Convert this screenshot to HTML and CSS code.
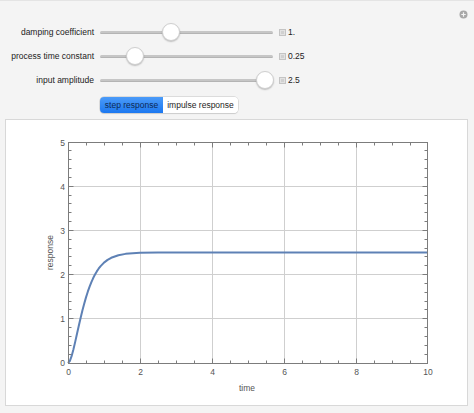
FILE: index.html
```html
<!DOCTYPE html>
<html>
<head>
<meta charset="utf-8">
<link rel="stylesheet" href="styles.css">
</head>
<body>
<div class="app">
  <div class="corner-btn" aria-label="more">
    <svg width="9" height="9" viewBox="0 0 9 9"><circle cx="4.5" cy="4.5" r="4" fill="#a7a7a7"/><path d="M4.5 2.3v4.4M2.3 4.5h4.4" stroke="#f4f4f4" stroke-width="1.2"/></svg>
  </div>
  <div class="controls">
    <div class="row">
      <span class="label">damping coefficient</span>
      <div class="slider"><div class="track"></div><div class="thumb" style="left:62px"></div></div>
      <span class="expand"></span>
      <span class="value">1.</span>
    </div>
    <div class="row">
      <span class="label">process time constant</span>
      <div class="slider"><div class="track"></div><div class="thumb" style="left:26px"></div></div>
      <span class="expand"></span>
      <span class="value">0.25</span>
    </div>
    <div class="row">
      <span class="label">input amplitude</span>
      <div class="slider"><div class="track"></div><div class="thumb" style="left:156px"></div></div>
      <span class="expand"></span>
      <span class="value">2.5</span>
    </div>
    <div class="toggle">
      <span class="seg active">step response</span>
      <span class="seg">impulse response</span>
    </div>
  </div>
  <div class="panel">
    <svg class="plot" width="461" height="285" viewBox="0 0 461 285">
      <g transform="translate(-6 -120)">
        <g class="grid">
          <path d="M140.5 142V363M212.5 142V363M284.5 142V363M356.5 142V363M68 186.5H428M68 230.5H428M68 274.5H428M68 318.5H428"/>
        </g>
        <path class="curve" d="M68 363L69.8 361.06L71.6 356.2L73.4 349.53L75.2 341.87L77 333.8L78.8 325.72L80.6 318L82.4 310.5L84.2 303.7L86 297.36L87.8 291.7L89.6 286.58L91.4 282.1L93.2 278.03L95 274.5L96.8 271.42L98.6 268.7L100.4 266.39L104 262.62L107.6 259.9L111.2 257.77L118.4 255.2L125.6 253.86L132.8 253.18L140 252.83L158 252.55L176 252.5L428 252.5"/>
        <rect class="frame" x="68.5" y="142.5" width="359" height="221"/>
        <g class="ticks">
          <path d="M86.5 363.5v-3M104.5 363.5v-3M122.5 363.5v-3M158.5 363.5v-3M176.5 363.5v-3M194.5 363.5v-3M230.5 363.5v-3M248.5 363.5v-3M266.5 363.5v-3M302.5 363.5v-3M320.5 363.5v-3M338.5 363.5v-3M374.5 363.5v-3M392.5 363.5v-3M410.5 363.5v-3
                   M140.5 363.5v-5M212.5 363.5v-5M284.5 363.5v-5M356.5 363.5v-5
                   M86.5 142.5v3M104.5 142.5v3M122.5 142.5v3M158.5 142.5v3M176.5 142.5v3M194.5 142.5v3M230.5 142.5v3M248.5 142.5v3M266.5 142.5v3M302.5 142.5v3M320.5 142.5v3M338.5 142.5v3M374.5 142.5v3M392.5 142.5v3M410.5 142.5v3
                   M140.5 142.5v5M212.5 142.5v5M284.5 142.5v5M356.5 142.5v5
                   M68.5 354.5h3M68.5 345.5h3M68.5 336.5h3M68.5 327.5h3M68.5 309.5h3M68.5 301.5h3M68.5 292.5h3M68.5 283.5h3M68.5 265.5h3M68.5 256.5h3M68.5 248.5h3M68.5 239.5h3M68.5 221.5h3M68.5 212.5h3M68.5 203.5h3M68.5 195.5h3M68.5 177.5h3M68.5 168.5h3M68.5 159.5h3M68.5 150.5h3
                   M68.5 318.5h5M68.5 274.5h5M68.5 230.5h5M68.5 186.5h5
                   M427.5 354.5h-3M427.5 345.5h-3M427.5 336.5h-3M427.5 327.5h-3M427.5 309.5h-3M427.5 301.5h-3M427.5 292.5h-3M427.5 283.5h-3M427.5 265.5h-3M427.5 256.5h-3M427.5 248.5h-3M427.5 239.5h-3M427.5 221.5h-3M427.5 212.5h-3M427.5 203.5h-3M427.5 195.5h-3M427.5 177.5h-3M427.5 168.5h-3M427.5 159.5h-3M427.5 150.5h-3
                   M427.5 318.5h-5M427.5 274.5h-5M427.5 230.5h-5M427.5 186.5h-5"/>
        </g>
        <g class="xlabels">
          <text x="68.5" y="374.5">0</text>
          <text x="140.5" y="374.5">2</text>
          <text x="212.5" y="374.5">4</text>
          <text x="284.5" y="374.5">6</text>
          <text x="356.5" y="374.5">8</text>
          <text x="428" y="374.5">10</text>
        </g>
        <g class="ylabels">
          <text x="65" y="366">0</text>
          <text x="65" y="322">1</text>
          <text x="65" y="277.5">2</text>
          <text x="65" y="233.5">3</text>
          <text x="65" y="189.5">4</text>
          <text x="65" y="145.5">5</text>
        </g>
        <text class="axis-title" x="247" y="391">time</text>
        <text class="axis-title" x="52.5" y="252.5" transform="rotate(-90 52.5 252.5)">response</text>
      </g>
    </svg>
  </div>
</div>
</body>
</html>
```

FILE: styles.css
```css
* { box-sizing: border-box; }
html, body { margin: 0; padding: 0; }
body {
  background: #efefef;
  font-family: "Liberation Sans", Arial, sans-serif;
  font-size: 8.5px;
  color: #222;
}
.app {
  position: relative;
  width: 474px;
  height: 413px;
  background: #f4f4f4;
  border-top: 1px solid #e4e4e4;
  padding-top: 23px;
}
.corner-btn {
  position: absolute;
  left: 459px;
  top: 9px;
  width: 9px;
  height: 9px;
  line-height: 0;
}
.controls {
  display: flex;
  flex-direction: column;
  gap: 8px;
}
.row {
  display: flex;
  align-items: center;
  height: 16px;
}
.label {
  width: 94px;
  text-align: right;
  white-space: nowrap;
  color: #222;
}
.slider {
  position: relative;
  width: 173px;
  height: 16px;
  margin-left: 6px;
  display: flex;
  align-items: center;
}
.track {
  width: 100%;
  height: 3px;
  border-radius: 2px;
  background: #c6c6c6;
  border-bottom: 1px solid #b4b4b4;
}
.thumb {
  position: absolute;
  top: -1px;
  width: 18px;
  height: 18px;
  border-radius: 50%;
  background: #fff;
  border: 1px solid #cfcfcf;
  box-shadow: 0 1px 1.5px rgba(0,0,0,0.22);
}
.expand {
  width: 7px;
  height: 7px;
  margin-left: 6px;
  background: #e2e2e2;
  border: 1px solid #c4c4c4;
  position: relative;
}
.expand::after {
  content: "";
  position: absolute;
  left: 1px; top: 1px;
  width: 3px; height: 3px;
  background: #d0d0d0;
}
.value {
  margin-left: 2px;
  color: #222;
}
.toggle {
  display: flex;
  margin-left: 100px;
  margin-top: 1px;
  width: 138px;
  height: 16px;
  border-radius: 4px;
  box-shadow: 0 0 0 0.5px #c4c4c4, 0 1px 1px rgba(0,0,0,0.12);
  overflow: hidden;
}
.seg {
  display: flex;
  align-items: center;
  justify-content: center;
  height: 16px;
  white-space: nowrap;
  background: #fff;
  color: #1e1e1e;
  flex: 1;
}
.seg.active {
  flex: 0 0 63px;
  background: linear-gradient(#4b9bf8, #1c78f0);
  color: #0d2a55;
}
.panel {
  margin: 6px 6px 0 5px;
  width: 463px;
  height: 287px;
  background: #fff;
  border: 1px solid #d8d8d8;
}
.plot { display: block; }
.grid path { stroke: #cfcfcf; stroke-width: 1; fill: none; }
.curve { stroke: #5e81b5; stroke-width: 2; fill: none; stroke-linejoin: round; }
.frame { fill: none; stroke: #7c7c7c; stroke-width: 1; }
.ticks path { stroke: #7c7c7c; stroke-width: 1; fill: none; }
.xlabels text {
  font-family: "Liberation Sans", Arial, sans-serif;
  font-size: 8.5px;
  fill: #555;
  text-anchor: middle;
}
.ylabels text {
  font-family: "Liberation Sans", Arial, sans-serif;
  font-size: 8.5px;
  fill: #555;
  text-anchor: end;
}
.axis-title {
  font-family: "Liberation Sans", Arial, sans-serif;
  font-size: 8.5px;
  fill: #555;
  text-anchor: middle;
}
```
